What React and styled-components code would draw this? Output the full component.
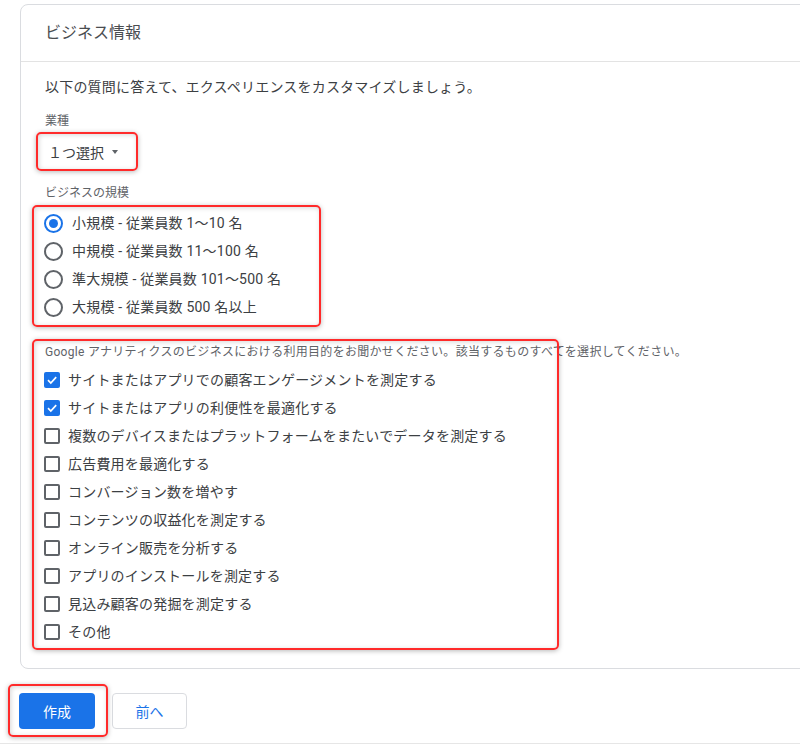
import React from "react";
import styled, { createGlobalStyle, css } from "styled-components";

const Global = createGlobalStyle`
  html, body { margin: 0; padding: 0; background: #fff; overflow: hidden; }
  body {
    font-family: Roboto, "Noto Sans CJK JP", "Noto Sans", sans-serif;
    color: #3c4043;
    -webkit-font-smoothing: antialiased;
  }
  * { box-sizing: border-box; }
`;

const Page = styled.div`
  width: 800px;
  height: 744px;
  padding-top: 4px;
  overflow: hidden;
`;

const Card = styled.section`
  margin-left: 20px;
  width: 800px;
  border: 1px solid #dadce0;
  border-radius: 8px;
  background: #fff;
`;

const CardHeader = styled.header`
  height: 57px;
  display: flex;
  align-items: center;
  padding: 0 24px;
  border-bottom: 1px solid #e3e3e3;
`;

const Title = styled.h2`
  margin: 0;
  font-size: 16px;
  font-weight: 400;
  line-height: 24px;
  color: #4a4d51;
`;

const CardBody = styled.div`
  padding: 15px 24px 22px;
  display: flex;
  flex-direction: column;
  align-items: flex-start;
`;

const Intro = styled.p`
  margin: 0;
  font-size: 14px;
  line-height: 20px;
  letter-spacing: 0.2px;
  color: #3c4043;
`;

const FieldLabel = styled.div`
  margin-top: ${(p) => p.$mt}px;
  font-size: 12px;
  line-height: 16px;
  color: #5f6368;
`;

const Highlight = styled.div`
  position: relative;
  margin-top: ${(p) => p.$mt || 0}px;
  &::after {
    content: "";
    position: absolute;
    top: ${(p) => p.$t}px;
    left: ${(p) => p.$l}px;
    bottom: ${(p) => p.$b}px;
    width: ${(p) => p.$w}px;
    border: 2px solid #ff2a2a;
    border-radius: 5px;
    box-shadow: 0 1px 5px rgba(0, 0, 0, 0.28), inset 1px 1px 5px rgba(0, 0, 0, 0.16);
    pointer-events: none;
  }
`;

const SelectButton = styled.button`
  margin-left: -8px;
  height: 37px;
  width: 96px;
  padding: 0 0 0 11px;
  display: flex;
  align-items: center;
  gap: 8px;
  border: none;
  background: transparent;
  font-family: inherit;
  font-size: 14px;
  white-space: nowrap;
  color: #3c4043;
  cursor: pointer;
`;

const Caret = styled.span`
  flex: none;
  width: 0;
  height: 0;
  border-left: 3.5px solid transparent;
  border-right: 3.5px solid transparent;
  border-top: 4px solid #5f6368;
`;

const OptionList = styled.div`
  display: flex;
  flex-direction: column;
`;

const OptionRow = styled.label`
  height: 28px;
  display: flex;
  align-items: center;
  font-size: 14px;
  line-height: 20px;
  letter-spacing: 0.2px;
  color: #3c4043;
  white-space: nowrap;
`;

const RadioCircle = styled.span`
  width: 19px;
  height: 19px;
  margin-left: -1px;
  margin-right: 9px;
  border-radius: 50%;
  border: 2px solid ${(p) => (p.$checked ? "#1a73e8" : "#5f6368")};
  display: flex;
  align-items: center;
  justify-content: center;
  flex: none;
  &::after {
    content: "";
    width: 9px;
    height: 9px;
    border-radius: 50%;
    background: ${(p) => (p.$checked ? "#1a73e8" : "transparent")};
  }
`;

const CheckBox = styled.span`
  width: 16px;
  height: 16px;
  margin-left: -1px;
  margin-right: 8px;
  border-radius: 2px;
  flex: none;
  display: flex;
  align-items: center;
  justify-content: center;
  ${(p) =>
    p.$checked
      ? css`
          background: #1a73e8;
          border: none;
        `
      : css`
          background: #fff;
          border: 2px solid #5f6368;
        `}
`;

const Question = styled.div`
  font-size: 12px;
  line-height: 16px;
  letter-spacing: 0.3px;
  color: #5f6368;
  white-space: nowrap;
  margin-bottom: 6px;
`;

const Footer = styled.div`
  padding: 24px 0 14px 19px;
  display: flex;
  align-items: center;
  gap: 17px;
  border-bottom: 1px solid #e6e6e6;
`;

const Button = styled.button`
  height: 36px;
  width: ${(p) => p.$w}px;
  border-radius: 4px;
  font-family: inherit;
  font-size: 14px;
  font-weight: 400;
  cursor: pointer;
  ${(p) =>
    p.$primary
      ? css`
          background: #1a73e8;
          border: none;
          color: #fff;
        `
      : css`
          background: #fff;
          border: 1px solid #dadce0;
          color: #1a73e8;
        `}
`;

const radios = [
  "小規模 - 従業員数 1～10 名",
  "中規模 - 従業員数 11～100 名",
  "準大規模 - 従業員数 101～500 名",
  "大規模 - 従業員数 500 名以上",
];

const checks = [
  ["サイトまたはアプリでの顧客エンゲージメントを測定する", true],
  ["サイトまたはアプリの利便性を最適化する", true],
  ["複数のデバイスまたはプラットフォームをまたいでデータを測定する", false],
  ["広告費用を最適化する", false],
  ["コンバージョン数を増やす", false],
  ["コンテンツの収益化を測定する", false],
  ["オンライン販売を分析する", false],
  ["アプリのインストールを測定する", false],
  ["見込み顧客の発掘を測定する", false],
  ["その他", false],
];

function Check() {
  return (
    <svg width="12" height="12" viewBox="0 0 12 12">
      <path d="M2 6.2 L4.8 9 L10.2 3.2" fill="none" stroke="#fff" strokeWidth="1.7" />
    </svg>
  );
}

export default function App() {
  return (
    <Page>
      <Global />
      <Card>
        <CardHeader>
          <Title>ビジネス情報</Title>
        </CardHeader>
        <CardBody>
          <Intro>以下の質問に答えて、エクスペリエンスをカスタマイズしましょう。</Intro>
          <FieldLabel $mt={16}>業種</FieldLabel>
          <Highlight $mt={4} $t={-1} $l={-9} $b={-1} $w={98}>
            <SelectButton>
              １つ選択
              <Caret />
            </SelectButton>
          </Highlight>
          <FieldLabel $mt={15}>ビジネスの規模</FieldLabel>
          <Highlight $mt={8} $t={-4} $l={-13} $b={-6} $w={285}>
            <OptionList>
              {radios.map((r, i) => (
                <OptionRow key={r}>
                  <RadioCircle $checked={i === 0} />
                  {r}
                </OptionRow>
              ))}
            </OptionList>
          </Highlight>
          <Highlight $mt={23} $t={-5} $l={-13} $b={-4} $w={523}>
            <Question>
              Google アナリティクスのビジネスにおける利用目的をお聞かせください。該当するものすべてを選択してください。
            </Question>
            <OptionList>
              {checks.map(([t, c]) => (
                <OptionRow key={t}>
                  <CheckBox $checked={c}>{c && <Check />}</CheckBox>
                  {t}
                </OptionRow>
              ))}
            </OptionList>
          </Highlight>
        </CardBody>
      </Card>
      <Footer>
        <Highlight $t={-9} $l={-11} $b={-8} $w={96}>
          <Button $primary $w={76}>作成</Button>
        </Highlight>
        <Button $w={75}>前へ</Button>
      </Footer>
    </Page>
  );
}
